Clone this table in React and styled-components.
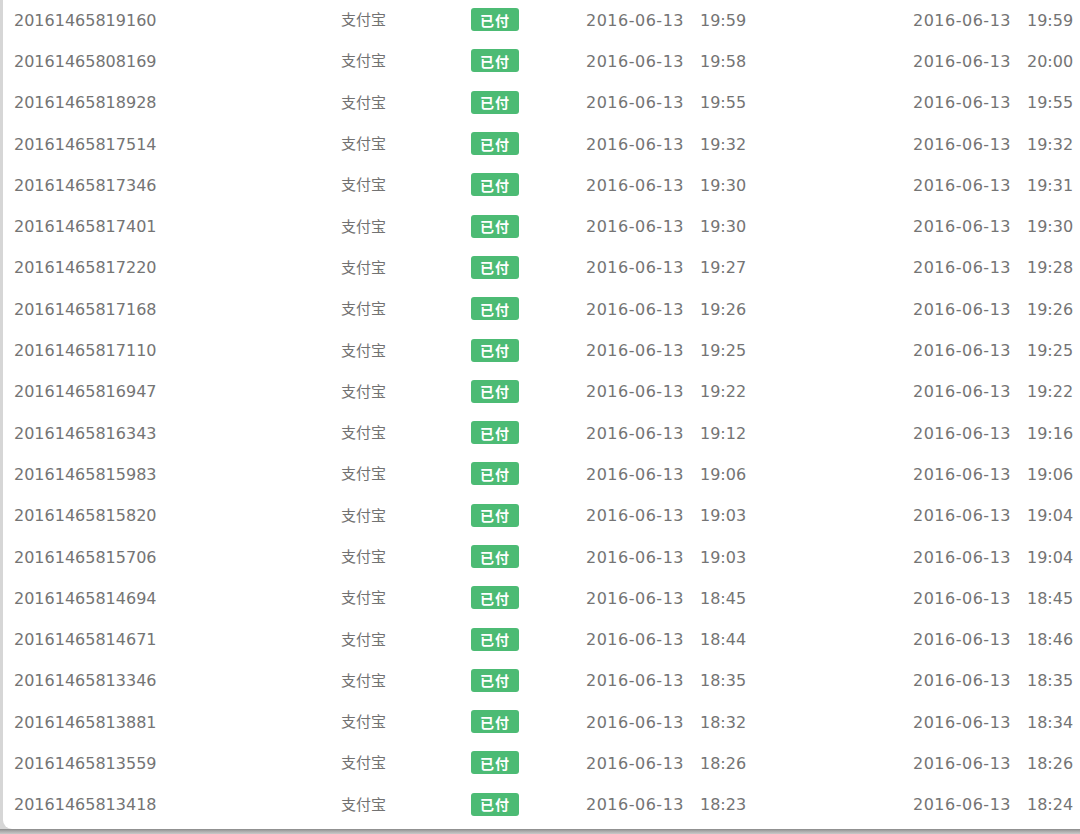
import React from "react";
import styled, { createGlobalStyle } from "styled-components";

const Global = createGlobalStyle`
  html, body { margin: 0; padding: 0; }
  body {
    background: #bdbdbd;
    width: 1080px;
    height: 834px;
    overflow: hidden;
  }
`;

const Frame = styled.div`
  width: 1080px;
  height: 834px;
  display: flex;
  flex-direction: column;
  background: linear-gradient(to bottom, #d6d6d6 0, #d6d6d6 829px, #8a8a8a 829px, #a8a8a8 831px, #c9c9c9 834px);
`;

const Panel = styled.div`
  margin-left: 3px;
  width: 1077px;
  height: 829px;
  background: #ffffff;
  border-bottom-left-radius: 9px;
  overflow: hidden;
`;

const List = styled.div`
  display: flex;
  flex-direction: column;
`;

const Row = styled.div`
  display: grid;
  grid-template-columns: 327px 130px 115px 327px 1fr;
  align-items: center;
  height: 41.3px;
  padding-left: 11px;
  font-family: "DejaVu Sans", "Noto Sans CJK SC", sans-serif;
  font-size: 16px;
  color: #747474;
`;

const Cell = styled.div`
  white-space: nowrap;
  line-height: 20px;
`;

const Pay = styled.div`
  font-family: "Noto Sans CJK SC", sans-serif;
  font-size: 15px;
  color: #727272;
  line-height: 20px;
  margin-top: -3px;
`;

const BadgeCell = styled.div`
  display: flex;
  margin-top: -2px;
`;

const Badge = styled.span`
  display: inline-flex;
  align-items: center;
  justify-content: center;
  width: 48px;
  height: 23px;
  border-radius: 3px;
  background: #4cbb74;
  color: #ffffff;
  font-family: "Noto Sans CJK SC", sans-serif;
  font-size: 14px;
  font-weight: 700;
  letter-spacing: 1px;
`;

const Stamp = styled.div`
  display: flex;
  gap: 16px;
  white-space: nowrap;
  line-height: 20px;
`;

const Date = styled.span`
  letter-spacing: 0.5px;
`;

const rows = [
  ["20161465819160", "19:59", "19:59"],
  ["20161465808169", "19:58", "20:00"],
  ["20161465818928", "19:55", "19:55"],
  ["20161465817514", "19:32", "19:32"],
  ["20161465817346", "19:30", "19:31"],
  ["20161465817401", "19:30", "19:30"],
  ["20161465817220", "19:27", "19:28"],
  ["20161465817168", "19:26", "19:26"],
  ["20161465817110", "19:25", "19:25"],
  ["20161465816947", "19:22", "19:22"],
  ["20161465816343", "19:12", "19:16"],
  ["20161465815983", "19:06", "19:06"],
  ["20161465815820", "19:03", "19:04"],
  ["20161465815706", "19:03", "19:04"],
  ["20161465814694", "18:45", "18:45"],
  ["20161465814671", "18:44", "18:46"],
  ["20161465813346", "18:35", "18:35"],
  ["20161465813881", "18:32", "18:34"],
  ["20161465813559", "18:26", "18:26"],
  ["20161465813418", "18:23", "18:24"],
];

export default function App() {
  return (
    <>
      <Global />
      <Frame>
        <Panel>
          <List>
            {rows.map(([id, t1, t2]) => (
              <Row key={id}>
                <Cell>{id}</Cell>
                <Pay>支付宝</Pay>
                <BadgeCell>
                  <Badge>已付</Badge>
                </BadgeCell>
                <Stamp>
                  <Date>2016-06-13</Date>
                  <span>{t1}</span>
                </Stamp>
                <Stamp>
                  <Date>2016-06-13</Date>
                  <span>{t2}</span>
                </Stamp>
              </Row>
            ))}
          </List>
        </Panel>
      </Frame>
    </>
  );
}
